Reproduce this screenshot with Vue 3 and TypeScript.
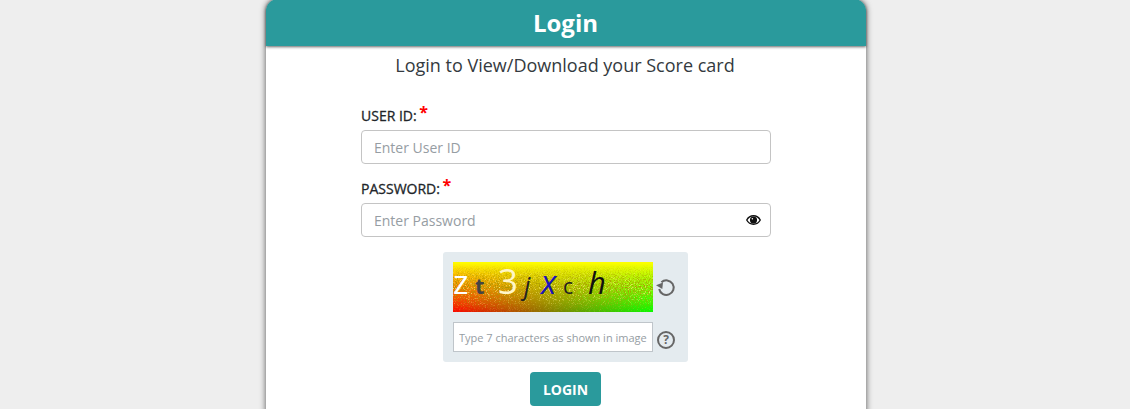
<template>
  <div class="page">
    <div class="card">
      <div class="card-header">Login</div>
      <div class="card-body">
        <p class="subtitle">Login to View/Download your Score card</p>
        <form class="login-form" @submit.prevent>
          <div class="field">
            <label for="user-id">USER ID: <span class="req">*</span></label>
            <input id="user-id" v-model="userId" type="text" placeholder="Enter User ID" />
          </div>
          <div class="field">
            <label for="password">PASSWORD: <span class="req">*</span></label>
            <div class="pass-wrap">
              <input id="password" v-model="password" :type="showPass ? 'text' : 'password'" placeholder="Enter Password" />
              <svg class="eye" viewBox="0 0 16 12" @click="showPass = !showPass">
                <path d="M.8 6C2.4 3 5 1.500 8 1.500S13.600 3 15.200 6C13.600 9 11 10.500 8 10.500S2.400 9 .8 6Z" fill="none" stroke="#111" stroke-width="1.500" />
                <circle cx="8" cy="6" r="3.800" fill="#111" />
                <circle cx="6.800" cy="4.700" r=".8" fill="#fff" />
              </svg>
            </div>
          </div>
          <div class="captcha-box">
            <div class="captcha-row">
              <svg class="captcha-img" viewBox="0 0 200 50" width="200" height="50">
                <defs>
                  <linearGradient id="lr" x1="0" x2="1" y1="0" y2="0">
                    <stop offset="0" stop-color="#ff0000" />
                    <stop offset="1" stop-color="#00ff00" />
                  </linearGradient>
                  <linearGradient id="tb" x1="0" x2="0" y1="0" y2="1">
                    <stop offset="0" stop-color="#ffff00" />
                    <stop offset="1" stop-color="#ffff00" stop-opacity="0" />
                  </linearGradient>
                  <linearGradient id="grain-fade" x1="0" x2="0" y1="0" y2="1">
                    <stop offset="0.05" stop-color="#fff" stop-opacity="0" />
                    <stop offset="0.5" stop-color="#fff" stop-opacity="1" />
                    <stop offset="0.95" stop-color="#fff" stop-opacity="0.2" />
                  </linearGradient>
                  <mask id="grain-mask">
                    <rect width="200" height="50" fill="url(#grain-fade)" />
                  </mask>
                  <filter id="grain-dark" x="0" y="0" width="100%" height="100%">
                    <feTurbulence type="fractalNoise" baseFrequency="1.100" numOctaves="2" seed="4" />
                    <feColorMatrix values="0 0 0 0 0.4  0 0 0 0 0.3  0 0 0 0 0  0 0 0 4 -1.750" />
                  </filter>
                  <filter id="grain-light" x="0" y="0" width="100%" height="100%">
                    <feTurbulence type="fractalNoise" baseFrequency="1.200" numOctaves="2" seed="11" />
                    <feColorMatrix values="0 0 0 0 1  0 0 0 0 0.85  0 0 0 0 0.2  0 0 0 4 -2.250" />
                  </filter>
                </defs>
                <rect width="200" height="50" fill="url(#lr)" />
                <rect width="200" height="50" fill="url(#tb)" />
                <g mask="url(#grain-mask)">
                  <rect width="200" height="50" filter="url(#grain-dark)" />
                  <rect width="200" height="50" filter="url(#grain-light)" />
                </g>
                <text v-for="c in captchaChars" :key="c.ch + c.x" :x="c.x" :y="c.y" :fill="c.fill"
                  :font-size="c.size" :font-weight="c.weight" :font-style="c.italic ? 'italic' : 'normal'">{{ c.ch }}</text>
              </svg>
              <svg class="side-icon" viewBox="0 0 20 20">
                <path d="M5.400 5.300A7.300 7.300 0 1 1 3.200 12" fill="none" stroke="#666" stroke-width="2" />
                <path d="M0 8.200 L7 5.500 L6.300 12 Z" fill="#666" />
              </svg>
            </div>
            <div class="captcha-row">
              <input v-model="captcha" class="captcha-input" type="text" placeholder="Type 7 characters as shown in image" />
              <svg class="side-icon help" viewBox="0 0 20 20">
                <circle cx="10" cy="10" r="8" fill="none" stroke="#666" stroke-width="2" />
                <text x="10" y="14.300" text-anchor="middle" font-size="12" font-weight="700" fill="#666">?</text>
              </svg>
            </div>
          </div>
          <button class="login-btn" type="submit">LOGIN</button>
        </form>
      </div>
    </div>
  </div>
</template>

<script setup lang="ts">
import { ref } from 'vue'

interface CaptchaChar {
  ch: string
  x: number
  y: number
  size: number
  fill: string
  weight?: number
  italic?: boolean
}

const userId = ref('')
const password = ref('')
const captcha = ref('')
const showPass = ref(false)

const captchaChars: CaptchaChar[] = [
  { ch: 'z', x: 0, y: 32, size: 33, fill: '#fff' },
  { ch: 't', x: 22, y: 32, size: 22, fill: '#444', weight: 700 },
  { ch: '3', x: 45, y: 32, size: 35, fill: '#fff6c8' },
  { ch: 'j', x: 71, y: 33, size: 25, fill: '#222', italic: true },
  { ch: 'x', x: 88, y: 32, size: 32, fill: '#1a14b8', italic: true },
  { ch: 'c', x: 110, y: 32, size: 21, fill: '#222' },
  { ch: 'h', x: 135, y: 32, size: 31, fill: '#111', italic: true }
]
</script>

<style>
html,
body {
  margin: 0;
  background: #eeeeee;
}
</style>

<style scoped>
.page {
  height: 409px;
  box-sizing: border-box;
  padding-left: 2px;
  overflow: hidden;
  display: flex;
  justify-content: center;
  font-family: "Open Sans", sans-serif;
}

.card {
  width: 600px;
  height: 440px;
  margin-top: -1px;
  background: #fff;
  border-radius: 12px;
  box-shadow: 0 0 6px rgba(0, 0, 0, 0.65);
}

.card-header {
  height: 47px;
  padding-right: 1px;
  background: #2a9a9c;
  border-radius: 12px 12px 0 0;
  box-shadow: 0 1px 3px rgba(0, 0, 0, 0.6);
  color: #fff;
  font-size: 24px;
  font-weight: 700;
  line-height: 47px;
  text-align: center;
  position: relative;
}

.subtitle {
  margin: 0;
  padding: 6px 2px 0 0;
  font-size: 18px;
  line-height: 26px;
  color: #343a40;
  text-align: center;
}

.login-form {
  width: 410px;
  margin: 0 auto;
  padding-top: 23px;
  display: flex;
  flex-direction: column;
  align-items: center;
}

.field {
  width: 100%;
  margin-bottom: 10px;
}

.field label {
  display: block;
  height: 29px;
  line-height: 29px;
  font-size: 14px;
  font-weight: 400;
  -webkit-text-stroke: 0.3px #212529;
  color: #212529;
}

.req {
  color: #ff0000;
  -webkit-text-stroke: 0;
  font-size: 16px;
  font-weight: 700;
  line-height: 1;
  position: relative;
  top: -3px;
  left: -1px;
}

input {
  box-sizing: border-box;
  font-family: inherit;
  outline: none;
}

.field input {
  display: block;
  width: 100%;
  height: 34px;
  padding: 0 12px;
  border: 1px solid #c4c4c4;
  border-radius: 4px;
  font-size: 14px;
  color: #495057;
  background: #fff;
}

.field input::placeholder {
  color: #969da3;
  opacity: 1;
}

.pass-wrap {
  position: relative;
}

.eye {
  position: absolute;
  right: 10px;
  top: 11px;
  width: 15px;
  height: 12px;
}

.captcha-box {
  width: 245px;
  height: 110px;
  box-sizing: border-box;
  margin: 5px 1px 0 0;
  padding: 10px;
  background: #e4ebef;
  border-radius: 3px;
  display: flex;
  flex-direction: column;
  gap: 10px;
}

.captcha-row {
  display: flex;
  align-items: center;
  gap: 3px;
}

.captcha-img {
  display: block;
  flex: none;
  font-family: "Open Sans", sans-serif;
}

.side-icon {
  width: 20px;
  height: 20px;
  flex: none;
  font-family: "Open Sans", sans-serif;
}

.help {
  margin-top: 5px;
}

.captcha-input {
  width: 200px;
  height: 30px;
  padding: 0 5px;
  border: 1px solid #bfc5ca;
  font-size: 11px;
  background: #fff;
}

.captcha-input::placeholder {
  color: #969da3;
  opacity: 1;
}

.login-btn {
  margin: 10px 1px 0 0;
  width: 71px;
  height: 34px;
  border: none;
  border-radius: 4px;
  background: #2a9a9c;
  color: #fff;
  font-family: inherit;
  font-size: 14px;
  font-weight: 700;
  cursor: pointer;
}
</style>
